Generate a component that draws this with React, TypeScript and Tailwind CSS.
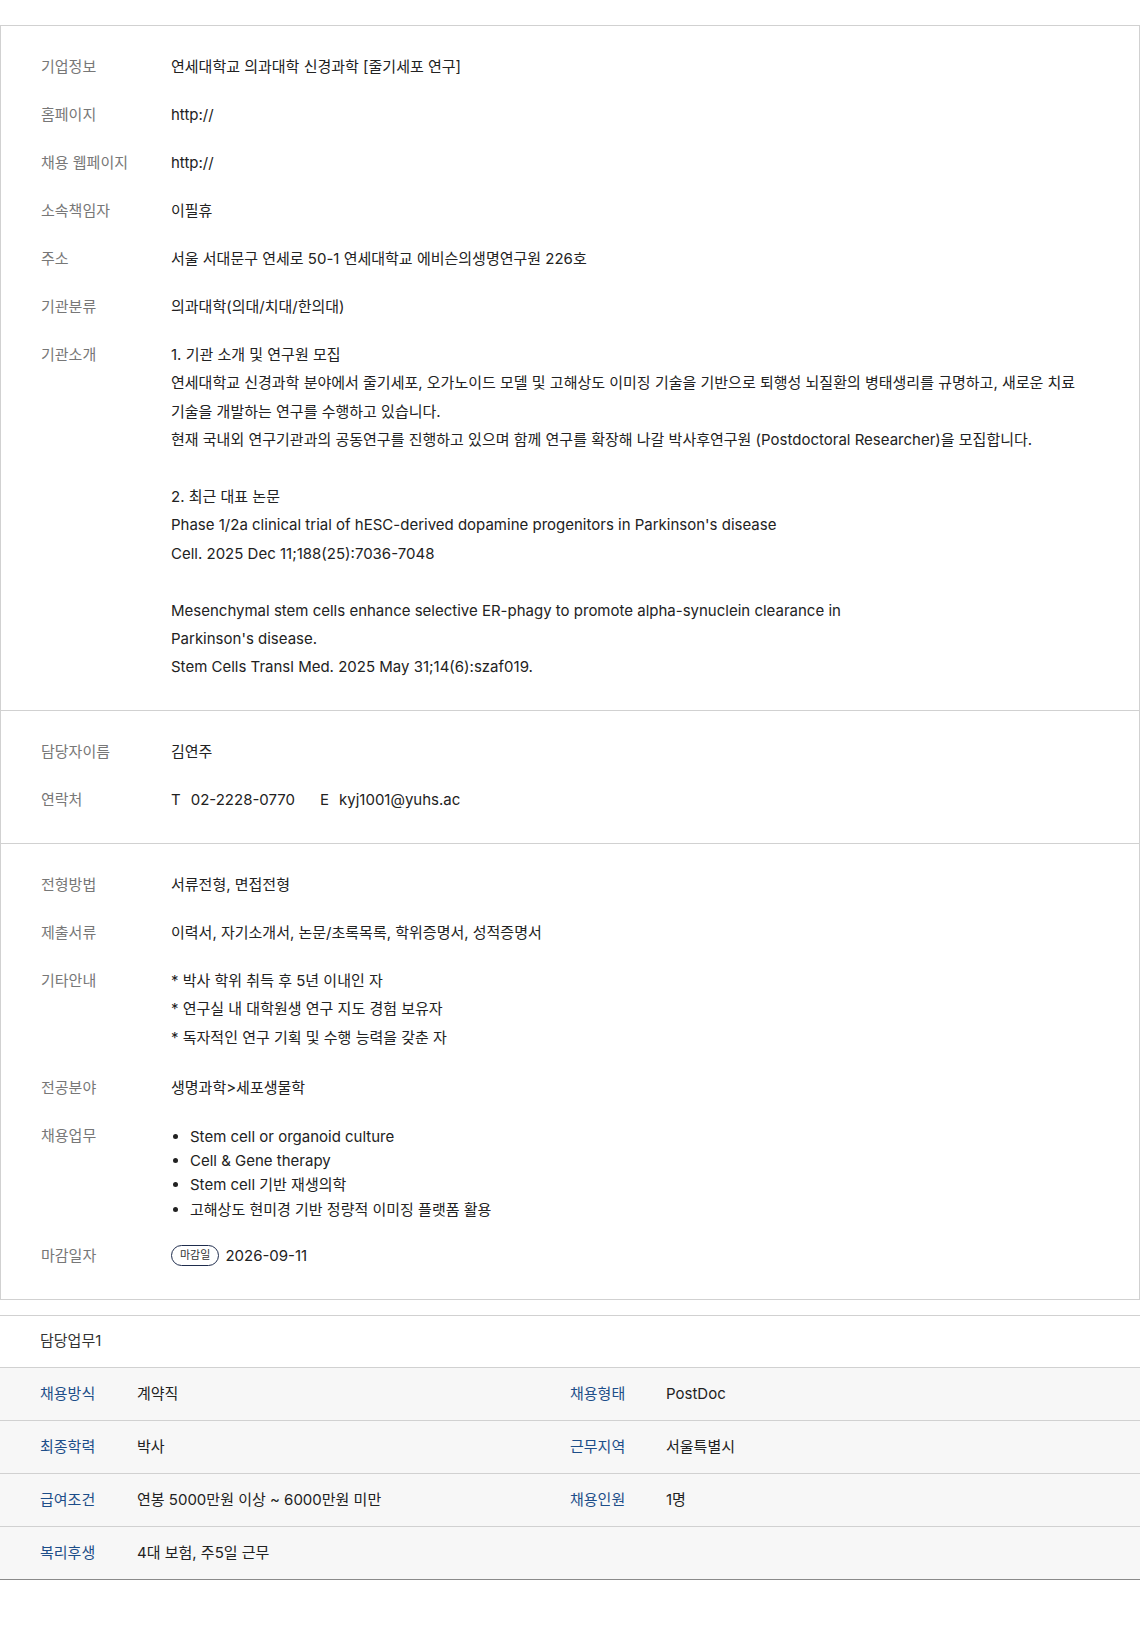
const companyRows: { label: string; value: string }[] = [
  { label: "기업정보", value: "연세대학교 의과대학 신경과학 [줄기세포 연구]" },
  { label: "홈페이지", value: "http://" },
  { label: "채용 웹페이지", value: "http://" },
  { label: "소속책임자", value: "이필휴" },
  { label: "주소", value: "서울 서대문구 연세로 50-1 연세대학교 에비슨의생명연구원 226호" },
  { label: "기관분류", value: "의과대학(의대/치대/한의대)" },
];

const intro = [
  "1. 기관 소개 및 연구원 모집",
  "연세대학교 신경과학 분야에서 줄기세포, 오가노이드 모델 및 고해상도 이미징 기술을 기반으로 퇴행성 뇌질환의 병태생리를 규명하고, 새로운 치료 기술을 개발하는 연구를 수행하고 있습니다.",
  "현재 국내외 연구기관과의 공동연구를 진행하고 있으며 함께 연구를 확장해 나갈 박사후연구원 (Postdoctoral Researcher)을 모집합니다.",
  "",
  "2. 최근 대표 논문",
  "Phase 1/2a clinical trial of hESC-derived dopamine progenitors in Parkinson's disease",
  "Cell. 2025 Dec 11;188(25):7036-7048",
  "",
  "Mesenchymal stem cells enhance selective ER-phagy to promote alpha-synuclein clearance in",
  "Parkinson's disease.",
  "Stem Cells Transl Med. 2025 May 31;14(6):szaf019.",
];

const duties = [
  "Stem cell or organoid culture",
  "Cell & Gene therapy",
  "Stem cell 기반 재생의학",
  "고해상도 현미경 기반 정량적 이미징 플랫폼 활용",
];

const tableRows: [string, string, string?, string?][] = [
  ["채용방식", "계약직", "채용형태", "PostDoc"],
  ["최종학력", "박사", "근무지역", "서울특별시"],
  ["급여조건", "연봉 5000만원 이상 ~ 6000만원 미만", "채용인원", "1명"],
  ["복리후생", "4대 보험, 주5일 근무"],
];

function Row({ label, children }: { label: string; children: React.ReactNode }) {
  return (
    <div className="flex items-start leading-[28px]">
      <div className="w-[130px] shrink-0 text-[#777]">{label}</div>
      <div className="flex-1 min-w-0 text-[#222] break-keep">{children}</div>
    </div>
  );
}

export default function App() {
  return (
    <div className="min-h-screen bg-white pt-[25px] text-[15px] font-[Inter,'Noto_Sans_CJK_KR',sans-serif]">
      <div className="border border-[#d1d1d1]">
        <section className="flex flex-col gap-5 px-10 pt-[27px] pb-[28px] border-b border-[#d1d1d1]">
          {companyRows.map((r) => (
            <Row key={r.label} label={r.label}>
              {r.value}
            </Row>
          ))}
          <Row label="기관소개">
            {intro.map((line, i) => (
              <p key={i} className="min-h-[28.4px] leading-[28.4px]">
                {line}
              </p>
            ))}
          </Row>
        </section>

        <section className="flex flex-col gap-5 px-10 pt-[27px] pb-[29px] border-b border-[#d1d1d1]">
          <Row label="담당자이름">김연주</Row>
          <Row label="연락처">
            <span className="mr-[10px]">T</span>
            <span className="mr-[25px]">02-2228-0770</span>
            <span className="mr-[10px]">E</span>
            <span>kyj1001@yuhs.ac</span>
          </Row>
        </section>

        <section className="flex flex-col gap-5 px-10 pt-[27px] pb-[29px]">
          <Row label="전형방법">서류전형, 면접전형</Row>
          <Row label="제출서류">이력서, 자기소개서, 논문/초록목록, 학위증명서, 성적증명서</Row>
          <Row label="기타안내">
            <p className="leading-[28.4px]">* 박사 학위 취득 후 5년 이내인 자</p>
            <p className="leading-[28.4px]">* 연구실 내 대학원생 연구 지도 경험 보유자</p>
            <p className="leading-[28.4px]">* 독자적인 연구 기획 및 수행 능력을 갖춘 자</p>
          </Row>
          <div className="pt-[2px]">
            <Row label="전공분야">생명과학&gt;세포생물학</Row>
          </div>
          <Row label="채용업무">
            <ul className="list-disc pl-[19px] mt-[3px] leading-[24.2px]">
              {duties.map((d) => (
                <li key={d}>{d}</li>
              ))}
            </ul>
          </Row>
          <Row label="마감일자">
            <div className="flex items-center h-[28px]">
              <span className="flex items-center h-[21px] px-[8px] rounded-full border border-[#1f2d4d] text-[11px] leading-none text-[#333]">
                마감일
              </span>
              <span className="ml-[6px]">2026-09-11</span>
            </div>
          </Row>
        </section>
      </div>

      <div className="mt-[15px] border-t border-[#d1d1d1]">
        <div className="h-[52px] flex items-center pl-10 text-[#333] border-b border-[#d1d1d1]">담당업무1</div>
        {tableRows.map((r, i) => (
          <div
            key={r[0]}
            className={`h-[53px] grid grid-cols-[137px_433px_96px_1fr] items-center bg-[#f7f7f7] border-b ${
              i === tableRows.length - 1 ? "border-[#8a8a8a]" : "border-[#d1d1d1]"
            }`}
          >
            <div className="pl-10 text-[#1d4e89]">{r[0]}</div>
            <div className="text-[#222]">{r[1]}</div>
            <div className="text-[#1d4e89]">{r[2] ?? ""}</div>
            <div className="text-[#222]">{r[3] ?? ""}</div>
          </div>
        ))}
      </div>
    </div>
  );
}
